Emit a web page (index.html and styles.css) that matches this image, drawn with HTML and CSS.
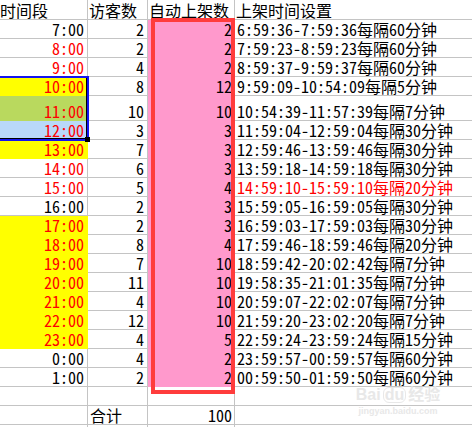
FILE: index.html
```html
<!DOCTYPE html>
<html lang="zh-CN">
<head>
<meta charset="utf-8">
<title>上架时间设置</title>
<link rel="stylesheet" href="styles.css">
</head>
<body>
<div class="sheet">
  <div class="row head">
    <div class="c a">时间段</div><div class="c b">访客数</div><div class="c k">自动上架数</div><div class="c d">上架时间设置</div>
  </div>
  <div class="row"><div class="c a">7:00</div><div class="c b">2</div><div class="c k pk">2</div><div class="c d">6:59:36-7:59:36每隔60分钟</div></div>
  <div class="row"><div class="c a red">8:00</div><div class="c b">2</div><div class="c k pk">2</div><div class="c d">7:59:23-8:59:23每隔60分钟</div></div>
  <div class="row"><div class="c a red">9:00</div><div class="c b">4</div><div class="c k pk">2</div><div class="c d">8:59:37-9:59:37每隔60分钟</div></div>
  <div class="row"><div class="c a red y">10:00</div><div class="c b">8</div><div class="c k pk">12</div><div class="c d">9:59:09-10:54:09每隔5分钟</div></div>
  <div class="row tall"><div class="c a red g">11:00</div><div class="c b">10</div><div class="c k pk">10</div><div class="c d">10:54:39-11:57:39每隔7分钟</div></div>
  <div class="row"><div class="c a red lb">12:00</div><div class="c b">3</div><div class="c k pk">3</div><div class="c d">11:59:04-12:59:04每隔30分钟</div></div>
  <div class="row"><div class="c a red y">13:00</div><div class="c b">7</div><div class="c k pk">3</div><div class="c d">12:59:46-13:59:46每隔30分钟</div></div>
  <div class="row"><div class="c a red">14:00</div><div class="c b">6</div><div class="c k pk">3</div><div class="c d">13:59:18-14:59:18每隔30分钟</div></div>
  <div class="row"><div class="c a red">15:00</div><div class="c b">5</div><div class="c k pk">4</div><div class="c d red">14:59:10-15:59:10每隔20分钟</div></div>
  <div class="row"><div class="c a">16:00</div><div class="c b">2</div><div class="c k pk">3</div><div class="c d">15:59:05-16:59:05每隔30分钟</div></div>
  <div class="row"><div class="c a red y">17:00</div><div class="c b">2</div><div class="c k pk">3</div><div class="c d">16:59:03-17:59:03每隔30分钟</div></div>
  <div class="row"><div class="c a red y">18:00</div><div class="c b">8</div><div class="c k pk">4</div><div class="c d">17:59:46-18:59:46每隔20分钟</div></div>
  <div class="row"><div class="c a red y">19:00</div><div class="c b">7</div><div class="c k pk">10</div><div class="c d">18:59:42-20:02:42每隔7分钟</div></div>
  <div class="row"><div class="c a red y">20:00</div><div class="c b">11</div><div class="c k pk">10</div><div class="c d">19:58:35-21:01:35每隔7分钟</div></div>
  <div class="row"><div class="c a red y">21:00</div><div class="c b">4</div><div class="c k pk">10</div><div class="c d">20:59:07-22:02:07每隔7分钟</div></div>
  <div class="row"><div class="c a red y">22:00</div><div class="c b">12</div><div class="c k pk">10</div><div class="c d">21:59:20-23:02:20每隔7分钟</div></div>
  <div class="row"><div class="c a red y">23:00</div><div class="c b">4</div><div class="c k pk">5</div><div class="c d">22:59:24-23:59:24每隔15分钟</div></div>
  <div class="row"><div class="c a">0:00</div><div class="c b">4</div><div class="c k pk">2</div><div class="c d">23:59:57-00:59:57每隔60分钟</div></div>
  <div class="row"><div class="c a">1:00</div><div class="c b">2</div><div class="c k pk">2</div><div class="c d">00:59:50-01:59:50每隔60分钟</div></div>
  <div class="row"><div class="c a"></div><div class="c b"></div><div class="c k"></div><div class="c d"></div></div>
  <div class="row"><div class="c a"></div><div class="c b txt">合计</div><div class="c k">100</div><div class="c d"></div></div>
  <div class="row"><div class="c a"></div><div class="c b"></div><div class="c k"></div><div class="c d"></div></div>

  <div class="selection"></div>
  <div class="handle"></div>
  <div class="redbox"></div>
  <div class="watermark"><span class="wm-logo">Bai<span class="wm-du">du</span>经验</span><span class="wm-url">jingyan.baidu.com</span></div>
</div>
</body>
</html>
```
FILE: styles.css
```css
html, body {
  margin: 0;
  padding: 0;
  background: #ffffff;
}
body {
  width: 472px;
  height: 427px;
  overflow: hidden;
}
.sheet {
  position: relative;
  width: 472px;
  font-family: "Noto Sans Mono CJK SC", "Noto Sans CJK SC", sans-serif;
  font-feature-settings: "hwid" 1;
  font-size: 16px;
  color: #000000;
}
.row {
  display: flex;
  height: 19px;
}
.row.head { height: 20px; }
.row.tall { height: 25px; }
.c {
  box-sizing: border-box;
  border-right: 1px solid #c4c4c4;
  border-bottom: 1px solid #c4c4c4;
  display: flex;
  align-items: flex-end;
  justify-content: flex-end;
  line-height: 18px;
  white-space: nowrap;
}
.a { width: 88px; padding-right: 3px; }
.b { width: 60px; padding-right: 3px; }
.k { width: 87px; padding-right: 2px; }
.d { flex: 1; justify-content: flex-start; padding-left: 2px; border-right: none; }
.head .c { justify-content: flex-start; padding-left: 1px; }
.head .a { padding-left: 0; }
.txt { justify-content: flex-start; padding-left: 2px; }

.red { color: #ff0000; }
.y { background: #ffff00; border-color: #ffff00; }
.g { background: #b9d95e; border-color: #b9d95e; }
.lb { background: #b9d8f9; border-color: #b9d8f9; }
.pk { background: #ff99cc; border-color: #ff99cc; }

.selection {
  position: absolute;
  left: -3px;
  top: 76px;
  width: 92px;
  height: 65px;
  box-sizing: border-box;
  border: 2px solid #1414f0;
  box-shadow: inset -1px -1px 0 #000000;
}
.handle {
  position: absolute;
  left: 85px;
  top: 137px;
  width: 5px;
  height: 5px;
  background: #000000;
}
.redbox {
  position: absolute;
  left: 151px;
  top: 18px;
  width: 84px;
  height: 376px;
  box-sizing: border-box;
  border: 4px solid #ff3c3c;
}
.watermark {
  position: absolute;
  left: 352px;
  top: 386px;
  width: 92px;
  display: flex;
  flex-direction: column;
  align-items: center;
  color: #e8e8e8;
  font-family: "Liberation Sans", "Noto Sans CJK SC", sans-serif;
  font-feature-settings: normal;
  pointer-events: none;
}
.wm-logo {
  font-size: 16px;
  font-weight: bold;
  line-height: 17px;
}
.wm-du {
  display: inline-block;
  border: 1px solid #e8e8e8;
  border-radius: 6px;
  padding: 0 1px;
  line-height: 14px;
  margin: 0 2px;
}
.wm-url {
  font-size: 9px;
  font-weight: bold;
  line-height: 11px;
  margin-top: 3px;
}
```
